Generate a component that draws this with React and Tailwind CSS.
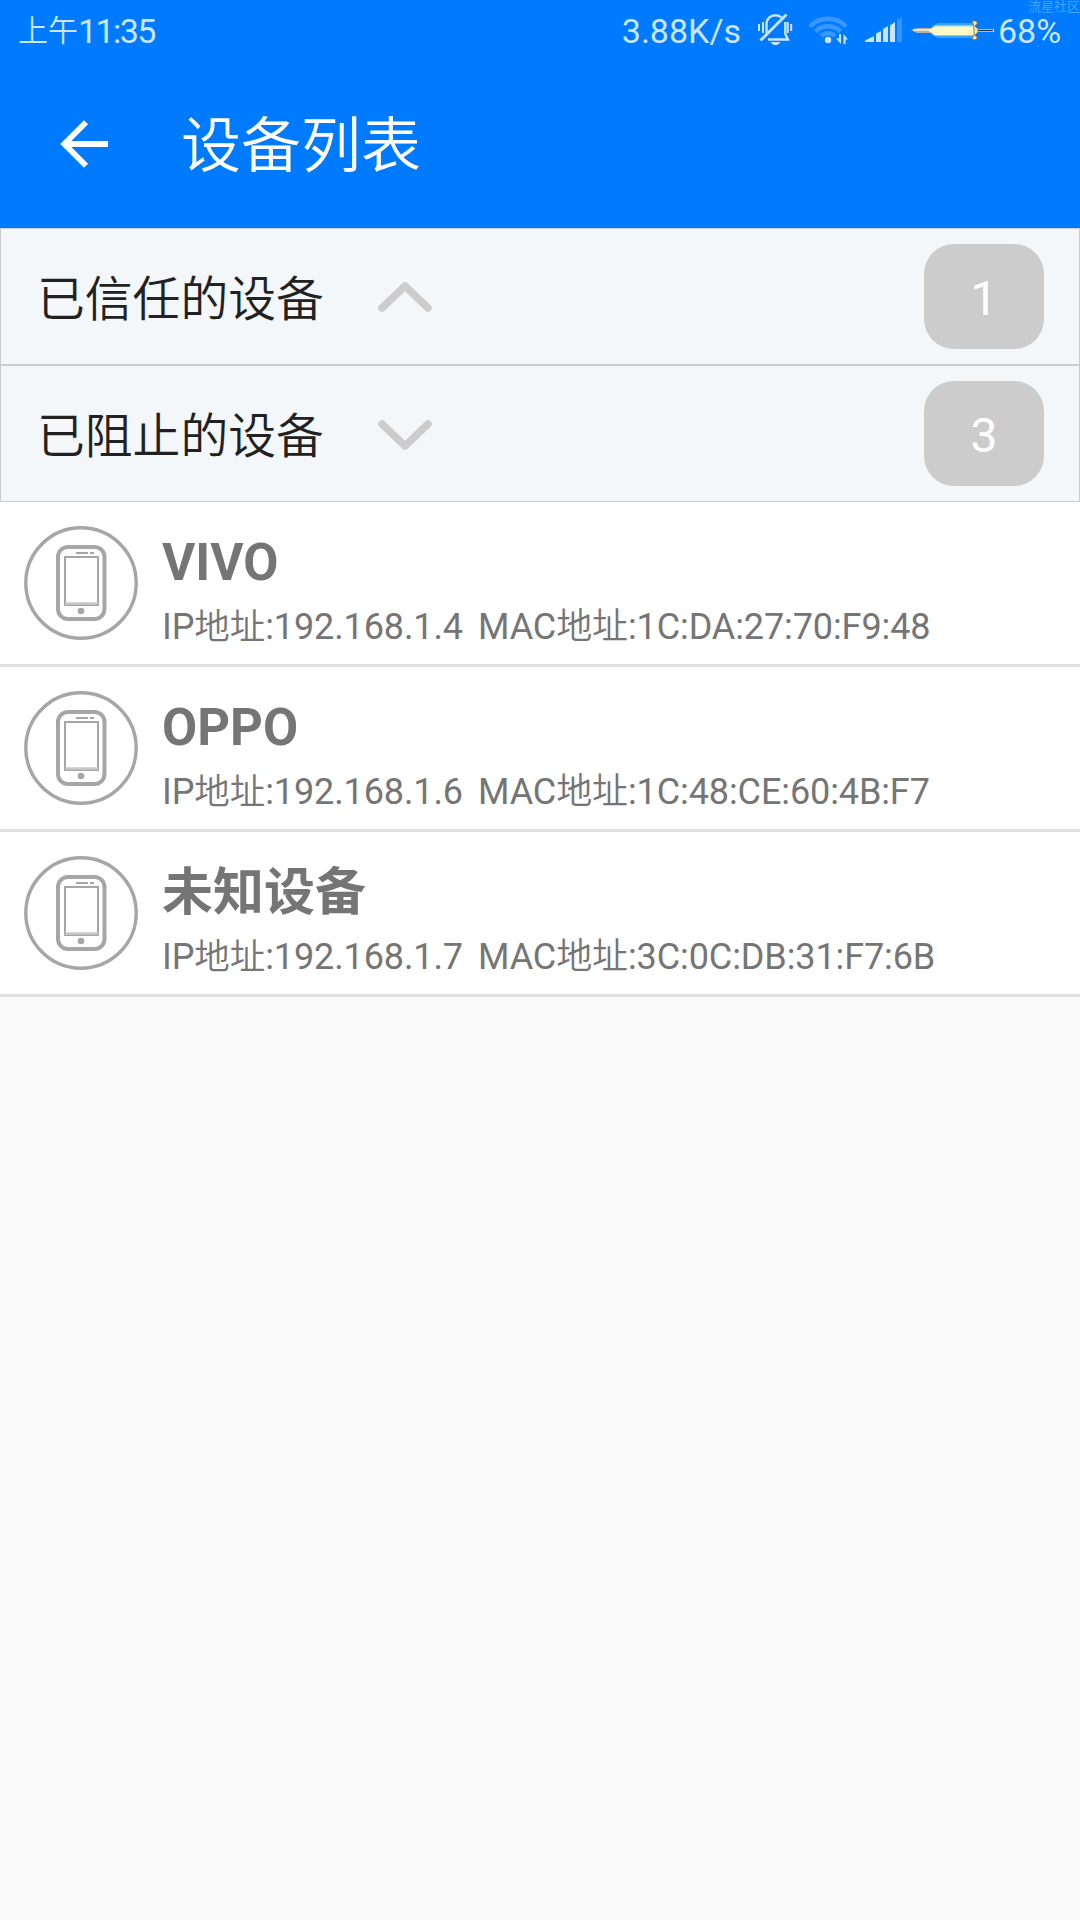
import React, { useState } from "react";

const blockedDevices = [
  { name: "VIVO", ip: "192.168.1.4", mac: "1C:DA:27:70:F9:48" },
  { name: "OPPO", ip: "192.168.1.6", mac: "1C:48:CE:60:4B:F7" },
  { name: "未知设备", ip: "192.168.1.7", mac: "3C:0C:DB:31:F7:6B" },
];

const MutedBellIcon = () => (
  <svg width="36" height="34" viewBox="757 13 36 34" fill="none" stroke="currentColor" strokeWidth="2.4">
    <path d="M766.500 33V24C766.500 18.500 770.500 15.200 775.500 15.200C778 15.200 780 16 781.500 17.500M785.300 22V34L788 39.500H768" />
    <path d="M786.500 14.500L760.500 40.500" strokeWidth="2.800" />
    <path d="M759 24V31M763 22V33M787.800 22V33M791.200 24V31" strokeWidth="2" />
    <path d="M770.500 42H780.500C779 44.500 777 45 775.500 45C774 45 772 44.500 770.500 42Z" fill="currentColor" stroke="none" />
  </svg>
);

const WifiIcon = () => (
  <svg width="40" height="30" viewBox="808 15 40 30" fill="none">
    <g stroke="#fff" strokeOpacity="0.22" strokeWidth="4.500">
      <path d="M810 26.500A25 25 0 0 1 846 26.500" />
      <path d="M815.500 31.500A17.500 17.500 0 0 1 840.500 31.500" />
      <path d="M821 36A10 10 0 0 1 835 36" />
    </g>
    <circle cx="828" cy="40" r="3.200" fill="currentColor" />
    <path d="M839 34H841V44L836 38.500H839ZM843.500 44V34L848 39.500H845.500V44Z" fill="currentColor" />
  </svg>
);

const SignalIcon = () => (
  <svg width="38" height="26" viewBox="865 18 38 26" fill="currentColor">
    <path d="M865 43V41.500L874 37V43ZM876 43V34.500L881 32V43ZM883 43V30L888 27V43ZM890 43V26.500L895 23V43Z" />
    <path d="M897 43V20.500L902 18V43Z" fillOpacity="0.25" />
  </svg>
);

// Battery level drawn as a glowing sword
const SwordBatteryIcon = () => (
  <svg width="84" height="22" viewBox="911 18 84 22">
    <path d="M932 25L938 22H974V37H938L932 34Z" fill="#3da0f2" />
    <path d="M929 29L935 24H974V35H935L929 31Z" fill="#8fc8e6" />
    <path d="M911 29L917 27H934V32H917Z" fill="#b8aea3" />
    <path d="M913 29H934" stroke="#f5f1e8" strokeWidth="1.500" />
    <path d="M928 29.500L935 25.500H974V34H935Z" fill="#fdf9c4" />
    <path d="M972 20L976 20L977.500 22L975 25L978 28V31L975 34L977.500 37L975 39L972 38L974 34V25Z" fill="#f5e7ad" stroke="#8b7955" strokeWidth="1" />
    <path d="M978 28H994V31H978Z" fill="#dce5e8" />
    <path d="M978 29.500H993" stroke="#293642" strokeWidth="1.500" />
  </svg>
);

const BackIcon = () => (
  <svg width="48" height="48" viewBox="60 120 48 48" fill="none" stroke="#fff" strokeWidth="5.800">
    <path d="M108 144H65M86 122.300L64.300 144L86 165.700" />
  </svg>
);

const ChevronIcon = ({ open }) => (
  <svg width="56" height="32" viewBox="0 0 56 32" fill="none" stroke="#ccc" strokeWidth="7.500" strokeLinecap="round" strokeLinejoin="round">
    <path d={open ? "M5 27L28 5L51 27" : "M5 6L28 28L51 6"} />
  </svg>
);

const PhoneIcon = () => (
  <svg width="114" height="114" viewBox="0 0 114 114" fill="none" stroke="#a6a6a6" className="shrink-0">
    <circle cx="57" cy="57" r="55.200" strokeWidth="3.400" />
    <rect x="34" y="21" width="46.500" height="72" rx="10" strokeWidth="4" />
    <rect x="41" y="31" width="33" height="48" strokeWidth="2" />
    <path d="M41 77.500H74" stroke="#c8c8c8" strokeWidth="2.500" />
    <path d="M52 27H64M66 27H70" strokeWidth="2" />
    <circle cx="57" cy="85" r="3.300" fill="#a6a6a6" stroke="none" />
  </svg>
);

const StatusBar = () => (
  <div className="relative flex h-[60px] items-center justify-between pl-[18px] pr-[17px] text-[#cce5ff]">
    <div className="flex items-center leading-[60px]">
      <span className="pt-px text-[30px] font-[350]">上午</span>
      <span className="pt-px text-[34px] tracking-[-1.6px]">11:35</span>
    </div>
    <div className="flex items-center">
      <span className="mr-4 pt-0.5 text-[34px]">3.88K/s</span>
      <MutedBellIcon />
      <span className="ml-[15px]"><WifiIcon /></span>
      <span className="ml-[17px]"><SignalIcon /></span>
      <span className="ml-2"><SwordBatteryIcon /></span>
      <span className="ml-[3px] w-[65px] pt-0.5 text-[34px]">68%</span>
    </div>
    <span className="absolute right-0 top-0 text-[13px] leading-[13px] text-[#3fa4ff]">流星社区</span>
  </div>
);

const SectionHeader = ({ title, count, open, onToggle }) => (
  <button
    onClick={onToggle}
    className="flex h-[137px] w-full items-center border border-[#ccc] bg-[#f3f7fa] pl-9 pr-[35px]"
  >
    <span className="w-[340px] pt-[7px] text-left text-[47.800px] font-[350] leading-[60px] text-[#212121]">{title}</span>
    <ChevronIcon open={open} />
    <span className="ml-auto flex h-[105px] w-[120px] items-center justify-center rounded-[30px] bg-[#ccc] pt-[5px] text-[48px] text-white">
      {count}
    </span>
  </button>
);

const DeviceRow = ({ name, ip, mac }) => (
  <div className="flex h-[165px] border-b-3 border-[#e0e0e0] bg-white pl-6 pt-6 text-[#757575]">
    <PhoneIcon />
    <div className="ml-6">
      <div className="h-[70px] pt-px text-[51px] font-bold leading-[72px]">{name}</div>
      <div className="flex whitespace-nowrap pt-px text-[36px] leading-[60px] tracking-[-0.1px]">
        <span className="w-[316px]">IP<span className="text-[35.500px] font-[350]">地址</span>:{ip}</span>
        <span>MAC<span className="font-[350]">地址</span>:{mac}</span>
      </div>
    </div>
  </div>
);

const App = () => {
  const [trustedOpen, setTrustedOpen] = useState(true);
  const [blockedOpen, setBlockedOpen] = useState(false);

  return (
    <div className="min-h-[1920px] w-[1080px] overflow-hidden bg-[#fafafa] font-[Roboto,'Noto_Sans_CJK_SC',sans-serif]">
      {/* Header */}
      <header className="h-[228px] bg-[#007bff]">
        <StatusBar />
        <div className="flex h-[168px] items-center pl-[60px]">
          <BackIcon />
          <h1 className="ml-[73px] pt-[5px] text-[60px] font-[350] leading-[80px] text-white">设备列表</h1>
        </div>
      </header>

      {/* Groups */}
      <SectionHeader title="已信任的设备" count={1} open={trustedOpen} onToggle={() => setTrustedOpen(!trustedOpen)} />
      <SectionHeader title="已阻止的设备" count={3} open={blockedOpen} onToggle={() => setBlockedOpen(!blockedOpen)} />

      {/* Blocked devices */}
      {blockedDevices.map((device) => (
        <DeviceRow key={device.mac} {...device} />
      ))}
    </div>
  );
};

export default App;
